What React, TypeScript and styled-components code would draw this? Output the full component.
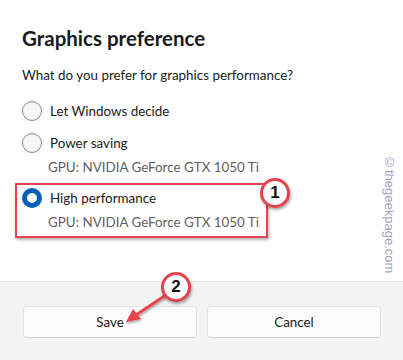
import React from 'react';
import styled, { createGlobalStyle } from 'styled-components';

const GlobalStyle = createGlobalStyle`
  html, body {
    margin: 0;
    padding: 0;
    background: #ffffff;
  }
  body {
    font-family: Lato, "Segoe UI", "Open Sans", sans-serif;
    color: #1b1b1b;
  }
`;

const gpuName = 'GPU: NVIDIA GeForce GTX 1050 Ti';

const options = [
  { label: 'Let Windows decide', sub: '', selected: false },
  { label: 'Power saving', sub: gpuName, selected: false },
  { label: 'High performance', sub: gpuName, selected: true },
];

const Dialog = ({ children }: any) => <WrapperDiv>{children}</WrapperDiv>;

const Option = ({ label, sub, selected }: any) => (
  <OptionBlock $selected={selected}>
    <OptionRow>
      <Radio $selected={selected} />
      <span>{label}</span>
    </OptionRow>
    {sub && <SubText>{sub}</SubText>}
  </OptionBlock>
);

const App = () => {
  return (
    <>
      <GlobalStyle />
      <Dialog>
        <Content>
          <Title>Graphics preference</Title>
          <Question>What do you prefer for graphics performance?</Question>
          <OptionList>
            {options.map((o) => (
              <Option key={o.label} {...o} />
            ))}
          </OptionList>
        </Content>
        <Footer>
          <Button>Save</Button>
          <Button>Cancel</Button>
        </Footer>

        <HighlightBox />
        <Badge $x={275} $y={193}>1</Badge>
        <ArrowSvg width="403" height="360" viewBox="0 0 403 360">
          <defs>
            <filter id="sh" x="-20%" y="-20%" width="140%" height="140%">
              <feDropShadow dx="1" dy="1.5" stdDeviation="1" floodColor="#000" floodOpacity="0.35" />
            </filter>
          </defs>
          <g filter="url(#sh)">
            <line x1="166" y1="295" x2="136" y2="315" stroke="#e8434c" strokeWidth="3" strokeLinecap="round" />
            <polygon points="126,322 133,309 141,319" fill="#e8434c" />
          </g>
        </ArrowSvg>
        <Badge $x={176} $y={287}>2</Badge>
        <Watermark>©thegeekpage.com</Watermark>
      </Dialog>
    </>
  );
};

export default App;

const WrapperDiv = styled.div`
  position: relative;
  width: 403px;
  height: 360px;
  overflow: hidden;
  display: flex;
  flex-direction: column;
  background: #ffffff;
`;

const Content = styled.div`
  flex: 1;
  padding: 24px 22px 0 22px;
`;

const Title = styled.h1`
  margin: 0;
  font-size: 20.5px;
  line-height: 28px;
  font-weight: 700;
  color: #1b1b1b;
`;

const Question = styled.p`
  margin: 13px 0 0 0;
  font-size: 13.4px;
  line-height: 20px;
  color: #1b1b1b;
`;

const OptionList = styled.div`
  margin-top: 10px;
  display: flex;
  flex-direction: column;
`;

const OptionBlock = styled.div<{ $selected: boolean }>`
  display: flex;
  flex-direction: column;
  margin-top: ${(p) => (p.$selected ? '5px' : '0')};
`;

const OptionRow = styled.div`
  display: flex;
  align-items: center;
  gap: 8px;
  height: 32px;
  font-size: 13.4px;
  color: #1b1b1b;
`;

const Radio = styled.span<{ $selected: boolean }>`
  box-sizing: border-box;
  width: 20px;
  height: 20px;
  border-radius: 50%;
  border: ${(p) => (p.$selected ? '5px solid #005fb8' : '1px solid #8a8a8a')};
  background: ${(p) => (p.$selected ? '#ffffff' : '#f7f7f7')};
`;

const SubText = styled.div`
  margin: -2px 0 0 26px;
  font-size: 13.4px;
  line-height: 20px;
  color: #5f5f5f;
`;

const Footer = styled.div`
  height: 79px;
  box-sizing: border-box;
  border-top: 1px solid #e5e5e5;
  background: #f3f3f3;
  padding: 24px 22px 0 23px;
  display: grid;
  grid-template-columns: 1fr 1fr;
  gap: 10px;
  align-items: start;
`;

const Button = styled.button`
  height: 32px;
  border: 1px solid #e3e3e3;
  border-bottom-color: #cfcfcf;
  border-radius: 4px;
  background: #fbfbfb;
  font-family: Lato, "Segoe UI", "Open Sans", sans-serif;
  font-size: 13.4px;
  color: #1b1b1b;
`;

const HighlightBox = styled.div`
  position: absolute;
  left: 15px;
  top: 183px;
  width: 253px;
  height: 55px;
  box-sizing: border-box;
  border: 2.5px solid #e8434c;
  box-shadow: 1px 2px 3px rgba(0, 0, 0, 0.3);
`;

const Badge = styled.div<{ $x: number; $y: number }>`
  position: absolute;
  left: ${(p) => p.$x - 15}px;
  top: ${(p) => p.$y - 15}px;
  width: 30px;
  height: 30px;
  box-sizing: border-box;
  border-radius: 50%;
  border: 3px solid #e8434c;
  background: #ffffff;
  box-shadow: 1px 2px 3px rgba(0, 0, 0, 0.35);
  display: flex;
  align-items: center;
  justify-content: center;
  font-family: "Liberation Sans", Arial, sans-serif;
  font-weight: 700;
  font-size: 17px;
  color: #111111;
`;

const ArrowSvg = styled.svg`
  position: absolute;
  left: 0;
  top: 0;
  pointer-events: none;
`;

const Watermark = styled.div`
  position: absolute;
  left: 382px;
  top: 155px;
  writing-mode: vertical-rl;
  font-family: "Liberation Sans", Arial, sans-serif;
  font-size: 13px;
  color: #a3a3bf;
`;
